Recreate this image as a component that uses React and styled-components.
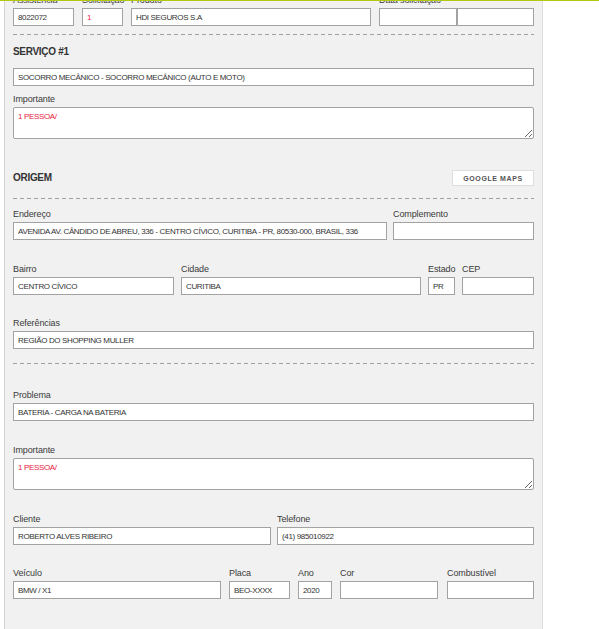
import React from "react";
import styled, { createGlobalStyle } from "styled-components";

const Global = createGlobalStyle`
  html, body { margin: 0; padding: 0; background: #ffffff; }
  body { font-family: "Liberation Sans", Arial, sans-serif; color: #333; overflow: hidden; }
`;

const TopLine = styled.div`
  position: fixed;
  top: 0;
  left: 0;
  right: 0;
  height: 1px;
  background: #b3c810;
  z-index: 5;
`;

const Panel = styled.div`
  margin: -6px 0 0 4px;
  width: 521px;
  padding: 0 8px 60px 8px;
  background: #f1f1f1;
  border-left: 1px solid #d4d4d4;
  border-right: 1px solid #dcdcdc;
`;

const Row = styled.div`
  display: flex;
  gap: ${(p) => p.$gap ?? 8}px;
  margin-top: ${(p) => p.$mt ?? 0}px;
  align-items: flex-start;
`;

const Field = styled.div`
  display: flex;
  flex-direction: column;
  flex: ${(p) => (p.$w ? `0 0 ${p.$w}px` : "1 1 auto")};
  min-width: 0;
  margin-top: ${(p) => p.$mt ?? 0}px;
`;

const Label = styled.label`
  display: block;
  font-size: 9px;
  line-height: 12px;
  height: 12px;
  margin-bottom: 2px;
  color: #3a3a3a;
  letter-spacing: -0.1px;
  white-space: nowrap;
`;

const Input = styled.input`
  box-sizing: border-box;
  width: 100%;
  height: 18px;
  margin: 0;
  padding: 0 4px;
  border: 1px solid #a2a2a2;
  border-radius: 0;
  background: #fff;
  font-family: "Liberation Sans", Arial, sans-serif;
  font-size: 8px;
  letter-spacing: -0.35px;
  color: #333;
  outline: none;
`;

const InputPair = styled.div`
  display: flex;
`;

const TextArea = styled.textarea`
  box-sizing: border-box;
  display: block;
  width: 100%;
  height: 32px;
  margin: 0;
  padding: 4px 4px;
  border: 1px solid #a2a2a2;
  border-radius: 2px;
  background: #fff;
  font-family: "Liberation Sans", Arial, sans-serif;
  font-size: 8px;
  letter-spacing: -0.35px;
  color: #e8213f;
  outline: none;
  resize: both;
`;

const Divider = styled.div`
  height: 1px;
  margin-top: ${(p) => p.$mt ?? 0}px;
  background: repeating-linear-gradient(
    to right,
    #a0a0a0 0 4px,
    transparent 4px 7px
  );
`;

const Heading = styled.h3`
  margin: ${(p) => p.$mt ?? 0}px 0 0 0;
  font-size: 10px;
  line-height: 14px;
  font-weight: bold;
  letter-spacing: -0.3px;
  color: #333;
`;

const SectionHeader = styled.div`
  display: flex;
  justify-content: space-between;
  align-items: center;
  height: 16px;
  margin-top: ${(p) => p.$mt ?? 0}px;
`;

const MapButton = styled.button`
  box-sizing: border-box;
  width: 82px;
  height: 16px;
  margin: 0;
  padding: 0;
  border: 1px solid #dedede;
  background: #fff;
  font-family: "Liberation Sans", Arial, sans-serif;
  font-size: 7px;
  font-weight: bold;
  letter-spacing: 0.6px;
  color: #555;
  cursor: pointer;
`;

export default function App() {
  return (
    <>
      <Global />
      <TopLine />
      <Panel>
        <Row>
          <Field $w={61}>
            <Label>Assistência</Label>
            <Input readOnly defaultValue="8022072" />
          </Field>
          <Field $w={41}>
            <Label>Solicitação</Label>
            <Input readOnly defaultValue="1" style={{ color: "#e8213f" }} />
          </Field>
          <Field $w={240}>
            <Label>Produto</Label>
            <Input readOnly defaultValue="HDI SEGUROS S.A" />
          </Field>
          <Field>
            <Label>Data solicitação</Label>
            <InputPair>
              <Input readOnly defaultValue="" />
              <Input readOnly defaultValue="" />
            </InputPair>
          </Field>
        </Row>

        <Divider $mt={8} />

        <Heading $mt={10}>SERVIÇO #1</Heading>

        <Row $mt={9}>
          <Field>
            <Input
              readOnly
              defaultValue="SOCORRO MECÂNICO - SOCORRO MECÂNICO (AUTO E MOTO)"
            />
          </Field>
        </Row>

        <Field $mt={7}>
          <Label>Importante</Label>
          <TextArea readOnly defaultValue="1 PESSOA/" />
        </Field>

        <SectionHeader $mt={31}>
          <Heading>ORIGEM</Heading>
          <MapButton type="button">GOOGLE MAPS</MapButton>
        </SectionHeader>

        <Divider $mt={12} />

        <Row $mt={9} $gap={6}>
          <Field $w={374}>
            <Label>Endereço</Label>
            <Input
              readOnly
              defaultValue="AVENIDA AV. CÂNDIDO DE ABREU, 336 - CENTRO CÍVICO, CURITIBA - PR, 80530-000, BRASIL, 336"
            />
          </Field>
          <Field>
            <Label>Complemento</Label>
            <Input readOnly defaultValue="" />
          </Field>
        </Row>

        <Row $mt={23} $gap={7}>
          <Field $w={161}>
            <Label>Bairro</Label>
            <Input readOnly defaultValue="CENTRO CÍVICO" />
          </Field>
          <Field $w={240}>
            <Label>Cidade</Label>
            <Input readOnly defaultValue="CURITIBA" />
          </Field>
          <Field $w={27}>
            <Label>Estado</Label>
            <Input readOnly defaultValue="PR" />
          </Field>
          <Field>
            <Label>CEP</Label>
            <Input readOnly defaultValue="" />
          </Field>
        </Row>

        <Row $mt={22}>
          <Field>
            <Label>Referências</Label>
            <Input readOnly defaultValue="REGIÃO DO SHOPPING MULLER" />
          </Field>
        </Row>

        <Divider $mt={14} />

        <Row $mt={25}>
          <Field>
            <Label>Problema</Label>
            <Input readOnly defaultValue="BATERIA - CARGA NA BATERIA" />
          </Field>
        </Row>

        <Field $mt={23}>
          <Label>Importante</Label>
          <TextArea readOnly defaultValue="1 PESSOA/" />
        </Field>

        <Row $mt={23} $gap={6}>
          <Field $w={258}>
            <Label>Cliente</Label>
            <Input readOnly defaultValue="ROBERTO ALVES RIBEIRO" />
          </Field>
          <Field>
            <Label>Telefone</Label>
            <Input readOnly defaultValue="(41) 985010922" />
          </Field>
        </Row>

        <Row $mt={22} $gap={8}>
          <Field $w={208}>
            <Label>Veículo</Label>
            <Input readOnly defaultValue="BMW / X1" />
          </Field>
          <Field $w={61}>
            <Label>Placa</Label>
            <Input readOnly defaultValue="BEO-XXXX" />
          </Field>
          <Field $w={34}>
            <Label>Ano</Label>
            <Input readOnly defaultValue="2020" />
          </Field>
          <Field $w={98}>
            <Label>Cor</Label>
            <Input readOnly defaultValue="" />
          </Field>
          <Field $w={87} style={{ marginLeft: 1 }}>
            <Label>Combustível</Label>
            <Input readOnly defaultValue="" />
          </Field>
        </Row>
      </Panel>
    </>
  );
}
